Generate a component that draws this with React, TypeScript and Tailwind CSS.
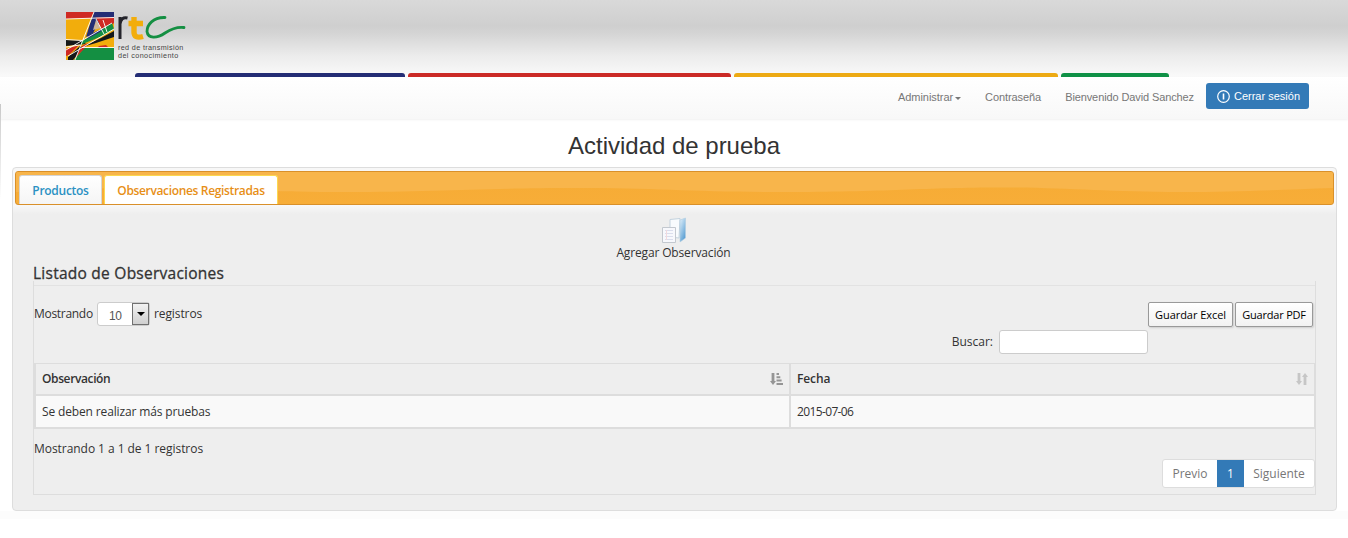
import React from "react";

function Logo() {
  return (
    <svg viewBox="0 0 48 48" className="h-12 w-12 shrink-0">
      <rect width="48" height="48" fill="#f2ad0c" />
      <path d="M0 0H28L25 6L0 7Z" fill="#cf2a23" />
      <path d="M28 0H48V5.500L26 6Z" fill="#242d75" />
      <path d="M30 5.500H48V11L37 20L33 14Z" fill="#cf2a23" />
      <path d="M26 5.500L30 6L33 11L27 21L20 25Z" fill="#242d75" />
      <path d="M30 8L27 18L35 16Z" fill="#cbb59b" />
      <path d="M0 28L15 28.500L20 32L0 34Z" fill="#15191a" />
      <path d="M35 26L48 19V25L30 31L16 35Z" fill="#15191a" />
      <path d="M16 29L46 11L48 17L34 25L14 33Z" fill="#148f42" />
      <path d="M22 23L38 16L34 20L21 27Z" fill="#242d75" />
      <path d="M0 37L13 33L3 43L0 44Z" fill="#cf2a23" />
      <path d="M2 45L14 34L18 36L7 48H2Z" fill="#15191a" />
      <path d="M8 48L18 36L48 36V48Z" fill="#148f42" />
      <path d="M16 34L22 31L18 37L9 46Z" fill="#cf2a23" />
      <path d="M33 34L40 33L43 36H31Z" fill="#cf2a23" />
      <path d="M0 7L48 5.500M28 0L9 48M30 7L38 22M37 8L41 20M0 38L46 11M2 44L48 17M0 27.500L16 28.500M16 35.500L48 35.500M0 35L14 33" stroke="#fff" strokeWidth="0.9" fill="none" />
    </svg>
  );
}

function AddIcon() {
  return (
    <svg viewBox="0 0 26 27" className="h-[27px] w-[26px]">
      <defs>
        <linearGradient id="folder" x1="0" y1="0" x2="0.6" y2="1">
          <stop offset="0" stopColor="#e2f1fb" />
          <stop offset="1" stopColor="#5b9fd3" />
        </linearGradient>
      </defs>
      <path d="M9 2.5L19 1.5L18 21L9 20Z" fill="#f8fbfd" stroke="#c4d3df" />
      <path d="M19 3L24.5 1V21L19 25Z" fill="url(#folder)" stroke="#b0cce1" strokeWidth=".6" />
      <path d="M1.5 10.5H14.5V25.5H1.5Z" fill="#f7f8fc" stroke="#c3c8cf" />
      <path d="M4 13.5H12M4 16.5H12M4 19.5H12M4 22.5H12" stroke="#dadeed" />
      <path d="M5.5 13V23" stroke="#f2dade" />
    </svg>
  );
}

function SortedIcon() {
  return (
    <svg viewBox="0 0 13 12" className="h-3 w-[13px]" fill="#959595">
      <path d="M1.6 0H4.4V8H6L3 12L0 8H1.6Z" />
      <path d="M6.5 0H9V2H6.5ZM6.5 3.3H10.3V5.3H6.5ZM6.5 6.6H11.6V8.6H6.5ZM6.5 10H13V12H6.5Z" />
    </svg>
  );
}

function UnsortedIcon() {
  return (
    <svg viewBox="0 0 12 12" className="h-3 w-3" fill="#c6c6c6">
      <path d="M1.6 0H4.4V8H6L3 12L0 8H1.6Z" />
      <path d="M7.6 12H10.4V4H12L9 0L6 4H7.6Z" />
    </svg>
  );
}

function Header() {
  return (
    <header className="flex h-[77px] flex-col justify-between bg-[linear-gradient(#d9d9d9_0px,#cfcfcf_26px,#d4d4d4_33px,#ececec_56px,#fafafa_77px)]">
      <div className="flex h-[73px] pt-3 pl-[66px]">
        <Logo />
        <div className="ml-[3px] h-[52px] w-[72px]">
          <svg viewBox="0 0 72 28" className="h-7 w-[72px]" fill="none">
            <path d="M3 27V5M3 12Q4 4.5 10.5 6" stroke="#24242b" strokeWidth="3" />
            <path d="M17 5V20Q17 27 26 24.5M11.500 11.5H26" stroke="#f2ad0c" strokeWidth="5.400" />
            <path d="M48 5.500C36 5 30 13 30 19.500C31 27 40 26.500 48 21C55 16.500 60 14.500 67 15.500" stroke="#148f42" strokeWidth="2.800" strokeLinecap="round" />
          </svg>
          <div className="mt-1 pl-[1px] font-['Liberation_Sans'] text-[7.2px] leading-2 whitespace-nowrap text-[#444]">
            <div className="tracking-[0.36px]">red de transmisión</div>
            <div className="tracking-[0.42px]">del conocimiento</div>
          </div>
        </div>
      </div>
      <div className="flex h-1 gap-[3px] pl-[135px]">
        <i className="w-[270px] rounded-t-[3px] bg-[#242d75]" />
        <i className="w-[323px] rounded-t-[3px] bg-[#cb2a26]" />
        <i className="w-[324px] rounded-t-[3px] bg-[#edaa13]" />
        <i className="w-[108px] rounded-t-[3px] bg-[#0f9146]" />
      </div>
    </header>
  );
}

function Nav() {
  return (
    <nav className="flex h-[42px] justify-end bg-linear-to-b from-white to-[#f8f8f8] pt-[6px] pr-[39px] font-['Liberation_Sans'] text-[11px] text-[#777] shadow-[0_1px_2px_rgba(0,0,0,0.06)]">
      <div className="mr-6 flex h-7 items-center gap-[2px] tracking-[-0.05px]">
        Administrar
        <i className="mt-[2px] border-x-[3px] border-t-[3px] border-x-transparent border-t-[#777]" />
      </div>
      <div className="mr-6 flex h-7 items-center tracking-[-0.08px]">Contraseña</div>
      <div className="mr-3 flex h-7 items-center tracking-[-0.11px]">Bienvenido David Sanchez</div>
      <button className="flex h-[26px] w-[103px] items-center justify-center gap-1 rounded-[3px] bg-[#337ab7] pl-[2px] whitespace-nowrap text-white">
        <svg viewBox="0 0 13 13" className="h-[13px] w-[13px]" fill="none" stroke="white">
          <circle cx="6.5" cy="6.5" r="5.8" strokeWidth="1.2" />
          <path d="M6.5 3.5V9.5" strokeWidth="1.6" />
        </svg>
        Cerrar sesión
      </button>
    </nav>
  );
}

function Tabs() {
  return (
    <div className="relative flex h-[34px] overflow-hidden rounded-[3px] border border-[#d9902a] bg-linear-to-b from-[#f6ab34] to-[#f7ad38] pt-[3px] pl-[3px]">
      <svg viewBox="0 0 1317 32" preserveAspectRatio="none" className="absolute inset-0 h-8 w-full">
        <path d="M0 0H1317V16C1260 18 1220 20 1165 20C1090 20 1050 15.500 985 15.500C910 15.500 870 20 765 20C680 20 640 16 560 16C470 16 420 20 330 20C250 20 200 16 120 16C60 16 30 19 0 20Z" fill="#f8b54b" />
      </svg>
      <div className="relative flex h-[29px] w-[83px] items-center justify-center rounded-t-[3px] border-x border-t border-[#d5d5d5] bg-linear-to-b from-white to-[#f5f5f5] pt-[2px] text-[12px] font-semibold text-[#2b91c3]">
        <span className="tracking-[-0.28px]">Productos</span>
      </div>
      <div className="relative ml-[2px] flex h-[30px] w-[174px] items-center justify-center rounded-t-[3px] border border-b-0 border-[#fbd850] bg-white pt-[1px] text-[12px] font-semibold whitespace-nowrap text-[#e78f17]">
        <span className="tracking-[-0.34px]">Observaciones Registradas</span>
      </div>
    </div>
  );
}

function Toolbar() {
  return (
    <div className="flex h-[77px] justify-between pt-4">
      <div className="flex h-6 items-center">
        <span className="w-[63px] tracking-[-0.3px]">Mostrando</span>
        <span className="flex h-6 w-[53px] justify-between rounded-[3px] border border-[#ccc] bg-white font-['Liberation_Sans'] text-[#555]">
          <span className="pt-[4px] pl-[11px] text-[12px] leading-[18px] tracking-[-0.3px]">10</span>
          <span className="flex h-[22px] w-[17px] items-center justify-center border border-[#707070] bg-linear-to-b from-[#f2f2f2] to-[#d0d0d0]">
            <i className="border-x-4 border-t-4 border-x-transparent border-t-black" />
          </span>
        </span>
        <span className="ml-1 tracking-[-0.1px]">registros</span>
      </div>
      <div className="flex">
        <label className="mt-7 flex h-6 items-center gap-[6px]">
          Buscar:
          <input className="h-6 w-[149px] rounded-[3px] border border-[#ccc] bg-white" />
        </label>
        <div className="mr-[2px] flex h-[25px] gap-[2px] text-[11px] text-black">
          <button className="w-[85px] rounded-[2px] border border-[#999] bg-linear-to-b from-white to-[#f2f2f2] pt-[1px] tracking-[-0.05px] whitespace-nowrap shadow-[1px_1px_2px_#ccc]">Guardar Excel</button>
          <button className="w-[78px] rounded-[2px] border border-[#999] bg-linear-to-b from-white to-[#f2f2f2] pt-[1px] tracking-[-0.2px] whitespace-nowrap shadow-[1px_1px_2px_#ccc]">Guardar PDF</button>
        </div>
      </div>
    </div>
  );
}

function Table() {
  return (
    <div className="grid h-[66px] grid-cols-[755px_1fr] grid-rows-[32px_33px] border-t border-r border-l-2 border-[#ddd]">
      <div className="flex items-center justify-between border-r-2 border-b-2 border-[#ddd] pr-[6px] pl-[6px] font-semibold">
        <span className="tracking-[-0.38px]">Observación</span>
        <SortedIcon />
      </div>
      <div className="flex items-center justify-between border-b-2 border-[#ddd] pr-[6px] pl-[6px] font-semibold">
        <span className="tracking-[-0.1px]">Fecha</span>
        <UnsortedIcon />
      </div>
      <div className="flex items-center border-r-2 border-b-2 border-[#ddd] bg-[#f9f9f9] pt-[1px] pl-[6px] tracking-[-0.14px]">Se deben realizar más pruebas</div>
      <div className="flex items-center border-b-2 border-[#ddd] bg-[#f9f9f9] pt-[1px] pl-[6px] tracking-[-0.63px]">2015-07-06</div>
    </div>
  );
}

export default function App() {
  return (
    <div className="relative h-[538px] overflow-hidden bg-white font-['Open_Sans',sans-serif] text-[12px] text-[#333]">
      <Header />
      <Nav />
      <div className="absolute top-[104px] left-0 h-24 w-px bg-linear-to-b from-[#c8c8c8] to-white" />
      <h1 className="flex h-12 items-center justify-center pt-[5px] font-['Liberation_Sans'] text-[24px] leading-[26px] tracking-[-0.01px]">Actividad de prueba</h1>
      <main className="mr-[11px] ml-3 h-[344px] rounded-[4px] border border-[#ddd] bg-[linear-gradient(#f7f7f7_0px,#f7f7f7_38px,#eee_46px)] px-[2px] pt-[3px]">
        <Tabs />
        <div className="pr-[18px] pl-[18px]">
          <div className="flex h-[58px] flex-col items-center pt-3 pr-[2px]">
            <AddIcon />
            <div className="pt-[1px] leading-4 tracking-[-0.15px]">Agregar Observación</div>
          </div>
          <h2 className="h-[18px] pt-[1px] text-[15.5px] leading-[18px] tracking-[0.25px] [-webkit-text-stroke:0.3px_#333]">Listado de Observaciones</h2>
          <section className="h-[214px] border-x border-b border-[#ddd]">
            <div className="h-[5px] border-b border-[#e2e2e2]" />
            <Toolbar />
            <Table />
            <div className="flex h-[30px] items-end pb-[1px] tracking-[-0.05px]">Mostrando 1 a 1 de 1 registros</div>
            <div className="flex justify-end">
              <div className="flex h-[29px] w-[153px] overflow-hidden rounded-[3px] border border-[#ddd] bg-white text-[#777]">
                <span className="flex w-[54px] items-center justify-center">Previo</span>
                <span className="flex w-[27px] items-center justify-center bg-[#337ab7] text-white">1</span>
                <span className="flex w-[70px] items-center justify-center">Siguiente</span>
              </div>
            </div>
          </section>
        </div>
      </main>
      <div className="h-2 bg-[#fcfcfc]" />
    </div>
  );
}
